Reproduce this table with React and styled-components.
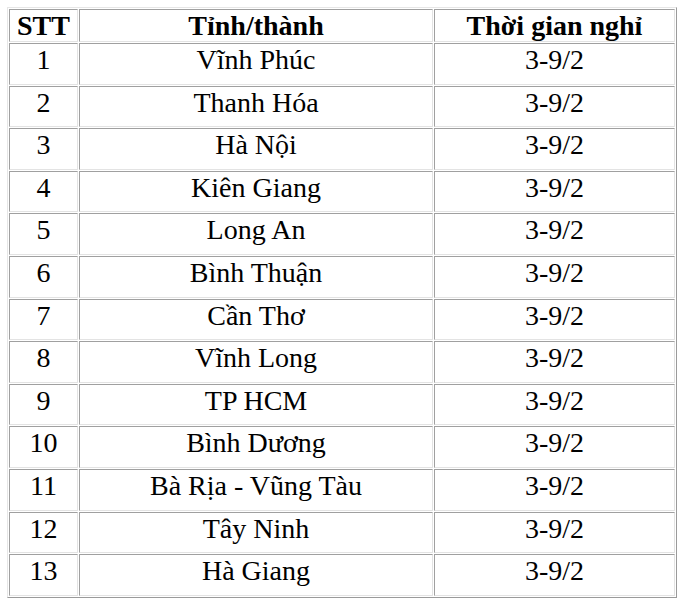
import React from 'react'
import styled, { createGlobalStyle } from 'styled-components'

const GlobalStyle = createGlobalStyle`
  html, body {
    margin: 0;
    padding: 0;
    background: #ffffff;
  }
`

const rows = [
  ['1', 'Vĩnh Phúc'],
  ['2', 'Thanh Hóa'],
  ['3', 'Hà Nội'],
  ['4', 'Kiên Giang'],
  ['5', 'Long An'],
  ['6', 'Bình Thuận'],
  ['7', 'Cần Thơ'],
  ['8', 'Vĩnh Long'],
  ['9', 'TP HCM'],
  ['10', 'Bình Dương'],
  ['11', 'Bà Rịa - Vũng Tàu'],
  ['12', 'Tây Ninh'],
  ['13', 'Hà Giang'],
]

export default function App() {
  return (
    <Page>
      <GlobalStyle />
      <Table>
        <colgroup>
          <col style={{ width: 69 }} />
          <col style={{ width: 354 }} />
          <col style={{ width: 241 }} />
        </colgroup>
        <thead>
          <tr>
            <Th>STT</Th>
            <Th>Tỉnh/thành</Th>
            <Th>Thời gian nghỉ</Th>
          </tr>
        </thead>
        <tbody>
          {rows.map(([no, name]) => (
            <tr key={no}>
              <Td>{no}</Td>
              <Td>{name}</Td>
              <Td>3-9/2</Td>
            </tr>
          ))}
        </tbody>
      </Table>
    </Page>
  )
}

const Page = styled.div`
  padding: 7px 0 0 7px;
`

const Table = styled.table`
  width: 670px;
  table-layout: fixed;
  border-collapse: separate;
  border-spacing: 1px;
  border-style: solid;
  border-width: 1px;
  border-color: #e6e6e6 #9a9a9a #9a9a9a #e6e6e6;
  font-family: "Liberation Serif", "Times New Roman", serif;
  font-size: 28px;
  color: #000000;
`

const Cell = `
  border-style: solid;
  border-width: 1px;
  border-color: #a0a0a0 #e3e3e3 #e3e3e3 #a0a0a0;
  padding: 0 3px;
  text-align: center;
  vertical-align: top;
  box-sizing: content-box;
  white-space: nowrap;
  overflow: hidden;
`

const Th = styled.th`
  ${Cell}
  height: 31px;
  line-height: 31px;
  font-weight: bold;
`

const Td = styled.td`
  ${Cell}
  height: 39.6px;
  line-height: 31px;
  font-weight: normal;
`
